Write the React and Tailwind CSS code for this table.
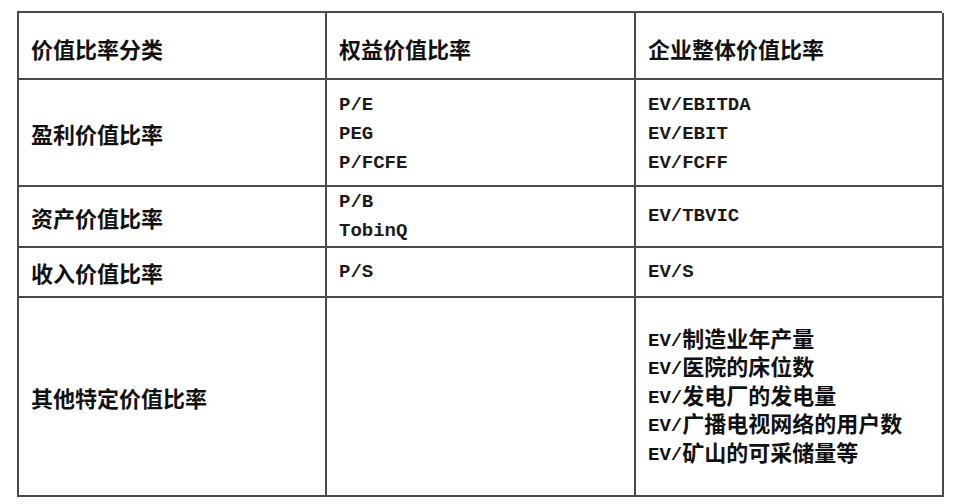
import React from 'react';

const cjk = '[font-family:"Noto_Sans_CJK_SC",sans-serif]';
const mono = '[font-family:"Liberation_Mono",monospace]';

function Cell({ children, className = '' }) {
    return (
        <div className={`flex flex-col justify-center border-r-2 border-b-2 border-[#4a4a4a] pl-[12px] ${className}`}>
            {children}
        </div>
    );
}

function Label({ children }) {
    return <div className={`${cjk} text-[22px] font-semibold leading-[28px] text-[#111]`}>{children}</div>;
}

function Code({ children }) {
    return <div className={`${mono} text-[19px] font-bold leading-[29px] text-[#1a1a1a]`}>{children}</div>;
}

// EV/ + chinese on one line; the mono part gets a taller line so the baselines meet
function Mixed({ latin, han }) {
    return (
        <div className="flex h-[28.5px] items-start text-[#111]">
            <span className={`${mono} block h-[28.5px] text-[19px] font-bold leading-[37px]`}>{latin}</span>
            <span className={`${cjk} block h-[28.5px] text-[22px] font-semibold leading-[28.5px]`}>{han}</span>
        </div>
    );
}

export default function App() {
    return (
        <div className="min-h-screen bg-white pt-[11px] pl-[17px]">
            <div className="grid w-[925px] grid-cols-[308px_309px_308px] grid-rows-[67px_107px_61px_50px_199px] border-t-2 border-l-2 border-[#4a4a4a]">
                <Cell className="pt-[4px]"><Label>价值比率分类</Label></Cell>
                <Cell className="pt-[4px]"><Label>权益价值比率</Label></Cell>
                <Cell className="pt-[4px]"><Label>企业整体价值比率</Label></Cell>

                <Cell><Label>盈利价值比率</Label></Cell>
                <Cell className="pt-[3px]">
                    <Code>P/E</Code>
                    <Code>PEG</Code>
                    <Code>P/FCFE</Code>
                </Cell>
                <Cell className="pt-[3px]">
                    <Code>EV/EBITDA</Code>
                    <Code>EV/EBIT</Code>
                    <Code>EV/FCFF</Code>
                </Cell>

                <Cell><Label>资产价值比率</Label></Cell>
                <Cell>
                    <Code>P/B</Code>
                    <Code>TobinQ</Code>
                </Cell>
                <Cell><Code>EV/TBVIC</Code></Cell>

                <Cell><Label>收入价值比率</Label></Cell>
                <Cell><Code>P/S</Code></Cell>
                <Cell><Code>EV/S</Code></Cell>

                <Cell><Label>其他特定价值比率</Label></Cell>
                <Cell></Cell>
                <Cell className="pb-[5px]">
                    <Mixed latin="EV/" han="制造业年产量" />
                    <Mixed latin="EV/" han="医院的床位数" />
                    <Mixed latin="EV/" han="发电厂的发电量" />
                    <Mixed latin="EV/" han="广播电视网络的用户数" />
                    <Mixed latin="EV/" han="矿山的可采储量等" />
                </Cell>
            </div>
        </div>
    );
}
